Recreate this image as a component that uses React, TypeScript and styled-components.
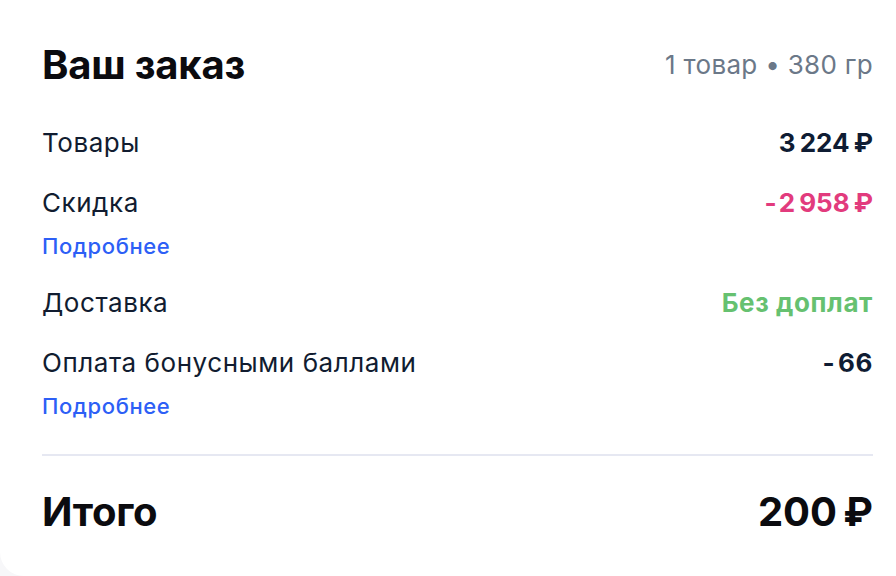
import React from "react";
import styled, { createGlobalStyle } from "styled-components";

const Global = createGlobalStyle`
  html, body { margin: 0; padding: 0; background: #f7f7f9; }
  body { font-family: Inter, "Noto Sans", sans-serif; -webkit-font-smoothing: antialiased; }
`;

const Card = styled.div`
  box-sizing: border-box;
  width: 896px;
  height: 576px;
  background: #ffffff;
  border-bottom-left-radius: 24px;
  padding: 41px 23px 0 42px;
  display: flex;
  flex-direction: column;
`;

const Header = styled.div`
  display: flex;
  justify-content: space-between;
  align-items: center;
`;

const Title = styled.h2`
  margin: 0;
  font-size: 40px;
  line-height: 48px;
  font-weight: 700;
  color: #0b0b0f;
  letter-spacing: -0.2px;
`;

const Meta = styled.span`
  font-size: 26px;
  line-height: 32px;
  color: #6b7888;
  font-weight: 400;
  letter-spacing: 0.3px;
`;

const List = styled.div`
  display: flex;
  flex-direction: column;
  gap: 28px;
  margin-top: 38px;
`;

const Item = styled.div`
  display: flex;
  flex-direction: column;
`;

const Row = styled.div`
  display: flex;
  justify-content: space-between;
  align-items: baseline;
`;

const Label = styled.span`
  font-size: 26px;
  line-height: 32px;
  color: #111c30;
  font-weight: 400;
  letter-spacing: 0.55px;
`;

const Value = styled.span<{ $tone?: "dark" | "pink" | "green" }>`
  font-size: 26px;
  line-height: 32px;
  font-weight: 700;
  letter-spacing: 0.6px;
  color: ${(p) =>
    p.$tone === "pink" ? "#e23b7d" : p.$tone === "green" ? "#66c170" : "#0f1c33"};
`;

const More = styled.a`
  margin-top: 14px;
  font-size: 22px;
  line-height: 26px;
  color: #2d5ff6;
  text-decoration: none;
  font-weight: 500;
  letter-spacing: 0.6px;
  align-self: flex-start;
`;

const Divider = styled.hr`
  margin: 35px 0 0;
  border: none;
  height: 2px;
  background: #e6e8f2;
`;

const Total = styled.div`
  display: flex;
  justify-content: space-between;
  align-items: baseline;
  margin-top: 32px;
`;

const TotalText = styled.span<{ $tight?: boolean }>`
  font-size: 40px;
  line-height: 48px;
  font-weight: 700;
  color: #0b0b0f;
  letter-spacing: ${(p) => (p.$tight ? "-1px" : "-0.3px")};
`;

type Line = { label: string; value: string; tone?: "dark" | "pink" | "green"; more?: boolean };

const lines: Line[] = [
  { label: "Товары", value: "3\u202F224\u202F₽" },
  { label: "Скидка", value: "-\u200A2\u202F958\u202F₽", tone: "pink", more: true },
  { label: "Доставка", value: "Без доплат", tone: "green" },
  { label: "Оплата бонусными баллами", value: "-\u200A66", more: true },
];

export default function App() {
  return (
    <>
      <Global />
      <Card>
        <Header>
          <Title>Ваш заказ</Title>
          <Meta>1 товар • 380 гр</Meta>
        </Header>
        <List>
          {lines.map((l) => (
            <Item key={l.label}>
              <Row>
                <Label>{l.label}</Label>
                <Value $tone={l.tone}>{l.value}</Value>
              </Row>
              {l.more && <More href="#">Подробнее</More>}
            </Item>
          ))}
        </List>
        <Divider />
        <Total>
          <TotalText>Итого</TotalText>
          <TotalText $tight>200{"\u202F"}₽</TotalText>
        </Total>
      </Card>
    </>
  );
}
